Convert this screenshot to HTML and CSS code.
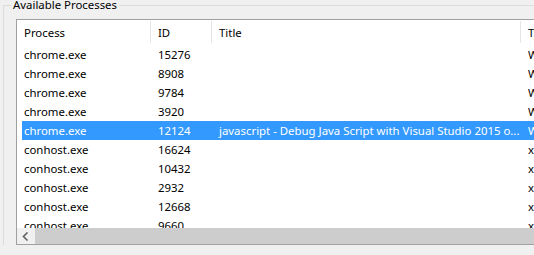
FILE: index.html
```html
<!DOCTYPE html>
<html lang="en">
<head>
    <meta charset="UTF-8">
    <title>Available Processes</title>
    <link rel="stylesheet" href="styles.css">
</head>
<body>

    <!-- Group box with the process list -->
    <div class="group">
        <span class="legend">Available Processes</span>

        <div class="list">
            <div class="header">
                <div class="col c1">Process</div>
                <div class="col c2">ID</div>
                <div class="col c3">Title</div>
                <div class="col c4">Type</div>
            </div>

            <div class="rows">
                <div class="row"><div class="col c1">chrome.exe</div><div class="col c2">15276</div><div class="col c3"></div><div class="col c4">Web</div></div>
                <div class="row"><div class="col c1">chrome.exe</div><div class="col c2">8908</div><div class="col c3"></div><div class="col c4">Web</div></div>
                <div class="row"><div class="col c1">chrome.exe</div><div class="col c2">9784</div><div class="col c3"></div><div class="col c4">Web</div></div>
                <div class="row"><div class="col c1">chrome.exe</div><div class="col c2">3920</div><div class="col c3"></div><div class="col c4">Web</div></div>
                <div class="row selected"><div class="col c1">chrome.exe</div><div class="col c2">12124</div><div class="col c3">javascript - Debug Java Script with Visual Studio 2015 o...</div><div class="col c4">Web</div></div>
                <div class="row"><div class="col c1">conhost.exe</div><div class="col c2">16624</div><div class="col c3"></div><div class="col c4">x64</div></div>
                <div class="row"><div class="col c1">conhost.exe</div><div class="col c2">10432</div><div class="col c3"></div><div class="col c4">x64</div></div>
                <div class="row"><div class="col c1">conhost.exe</div><div class="col c2">2932</div><div class="col c3"></div><div class="col c4">x64</div></div>
                <div class="row"><div class="col c1">conhost.exe</div><div class="col c2">12668</div><div class="col c3"></div><div class="col c4">x64</div></div>
                <div class="row"><div class="col c1">conhost.exe</div><div class="col c2">9660</div><div class="col c3"></div><div class="col c4">x64</div></div>
            </div>

            <!-- Horizontal scrollbar -->
            <div class="hscroll">
                <div class="arrow">
                    <svg width="8" height="9" viewBox="0 0 8 9">
                        <path d="M5.5 0.5 L1.5 4.5 L5.5 8.5" fill="none" stroke="#606060" stroke-width="1.6"/>
                    </svg>
                </div>
                <div class="thumb"></div>
            </div>
        </div>
    </div>

</body>
</html>
```

FILE: styles.css
```css
body {
    margin: 0;
    background-color: #f0f0f0;
    font-family: "Noto Sans", "Open Sans", sans-serif;
    font-size: 11.4px;
    color: #000;
    overflow: hidden;
    height: 255px;
}
.group {
    position: relative;
    margin: 5px 0 0 3px;
    padding: 13px 0 0 12px;
    border-top: 1px solid #dcdcdc;
    border-left: 1px solid #dcdcdc;
}
.legend {
    position: absolute;
    top: -9px;
    left: 7px;
    padding: 0 2px;
    background-color: #f0f0f0;
    line-height: 16px;
}
.list {
    background-color: #fff;
    border: 1px solid #a0a0a0;
    border-right: none;
    height: 224px;
    display: flex;
    flex-direction: column;
    overflow: hidden;
}
.header, .row {
    display: flex;
    white-space: nowrap;
}
.header {
    height: 25px;
    line-height: 24px;
    flex-shrink: 0;
}
.header .col {
    border-right: 1px solid #e5e5e5;
    margin: 1px 0 0 0;
    height: 22px;
}
.col {
    padding-left: 7px;
    overflow: hidden;
    box-sizing: border-box;
    flex-shrink: 0;
}
.c1 { width: 134px; }
.c2 { width: 61px; }
.c3 { width: 309px; }
.c4 { width: 40px; }
.rows {
    flex: 1;
    overflow: hidden;
}
.row {
    height: 19px;
    line-height: 20px;
}
.row.selected {
    background-color: #3399ff;
    color: #fff;
    margin-left: 5px;
}
.row.selected .c1 {
    width: 129px;
    padding-left: 2px;
}
.hscroll {
    height: 16px;
    display: flex;
    background-color: #f0f0f0;
    flex-shrink: 0;
}
.arrow {
    width: 18px;
    display: flex;
    align-items: center;
    justify-content: center;
}
.thumb {
    flex: 1;
    background-color: #cdcdcd;
}
```
